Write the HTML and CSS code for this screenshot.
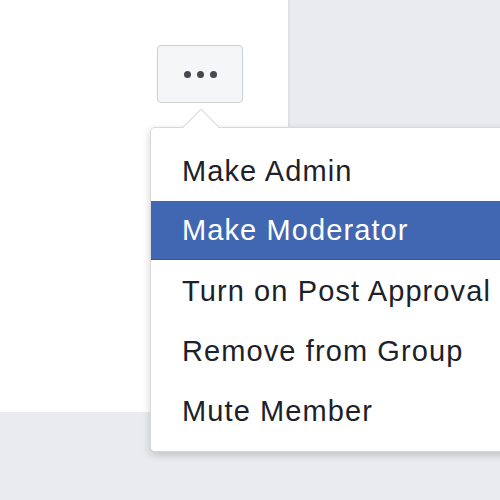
FILE: index.html
```html
<!DOCTYPE html>
<html>
<head>
<meta charset="utf-8">
<link rel="stylesheet" href="styles.css">
</head>
<body>
<div class="page">
  <div class="panel">
    <button class="more-btn" aria-label="More">
      <span class="dot"></span><span class="dot"></span><span class="dot"></span>
    </button>
  </div>
  <div class="menu">
    <div class="item">Make Admin</div>
    <div class="item active">Make Moderator</div>
    <div class="item">Turn on Post Approval</div>
    <div class="item">Remove from Group</div>
    <div class="item">Mute Member</div>
  </div>
</div>
</body>
</html>
```
FILE: styles.css
```css
html, body {
  margin: 0;
  padding: 0;
}
body {
  background: #e9ebee;
  width: 500px;
  height: 500px;
  overflow: hidden;
  font-family: "Liberation Sans", Arial, sans-serif;
}
.page {
  position: relative;
  width: 500px;
  height: 500px;
  overflow: hidden;
}
.panel {
  width: 290px;
  height: 412px;
  background: #fff;
  border-right: 2px solid #dfe1e5;
  box-sizing: border-box;
  padding: 45px 0 0 157px;
}
.more-btn {
  width: 86px;
  height: 58px;
  box-sizing: border-box;
  background: #f5f6f7;
  border: 1px solid #ccd0d5;
  border-radius: 4px;
  display: flex;
  align-items: center;
  justify-content: center;
  gap: 6px;
  padding: 0;
  margin: 0;
}
.dot {
  width: 7px;
  height: 7px;
  border-radius: 50%;
  background: #444950;
}
.menu {
  position: absolute;
  left: 150px;
  top: 127px;
  width: 420px;
  box-sizing: border-box;
  background: #fff;
  border: 1px solid rgba(0, 0, 0, 0.15);
  border-radius: 5px;
  box-shadow: 0 3px 8px rgba(0, 0, 0, 0.18);
  padding: 13px 0 10px 0;
}
.menu::before {
  content: "";
  position: absolute;
  left: 37px;
  top: -14px;
  width: 25px;
  height: 25px;
  background: #fff;
  border-left: 1px solid rgba(0, 0, 0, 0.15);
  border-top: 1px solid rgba(0, 0, 0, 0.15);
  transform: rotate(45deg);
}
.item {
  position: relative;
  height: 60px;
  box-sizing: border-box;
  display: flex;
  align-items: center;
  padding-left: 31px;
  font-size: 29px;
  letter-spacing: 1.1px;
  color: #1d2129;
  white-space: nowrap;
}
.item.active {
  background: #4267b2;
  color: #fff;
  border-bottom: 1px solid #365899;
  height: 59px;
  margin-bottom: 1px;
}
```
